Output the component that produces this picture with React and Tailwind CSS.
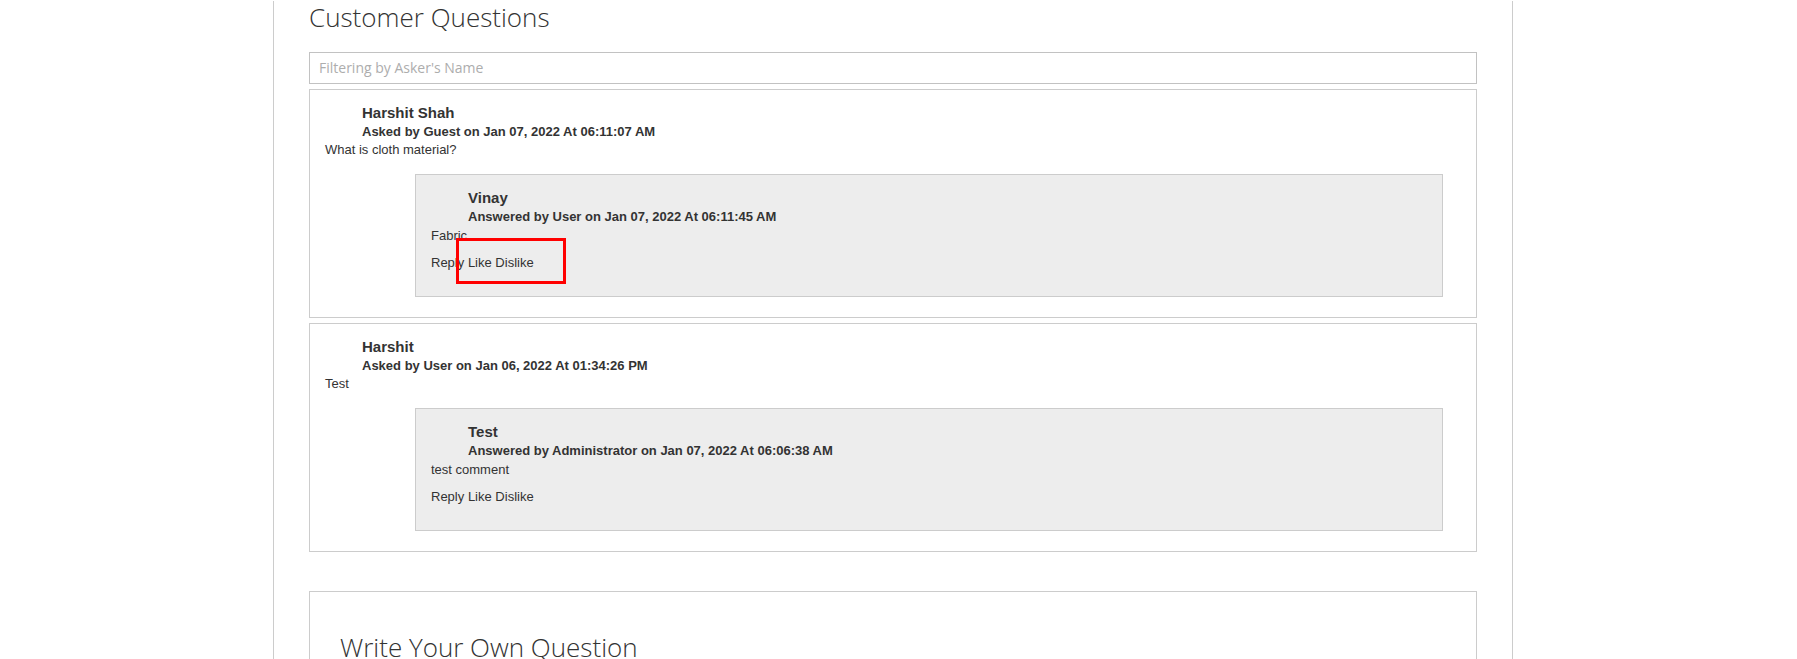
export default function App() {
  const questions = [
    {
      name: "Harshit Shah",
      meta: "Asked by Guest on Jan 07, 2022 At 06:11:07 AM",
      text: "What is cloth material?",
      answer: {
        name: "Vinay",
        meta: "Answered by User on Jan 07, 2022 At 06:11:45 AM",
        text: "Fabric",
      },
      highlight: true,
    },
    {
      name: "Harshit",
      meta: "Asked by User on Jan 06, 2022 At 01:34:26 PM",
      text: "Test",
      answer: {
        name: "Test",
        meta: "Answered by Administrator on Jan 07, 2022 At 06:06:38 AM",
        text: "test comment",
      },
      highlight: false,
    },
  ];

  return (
    <div className="h-[659px] overflow-hidden bg-white">
      <div className="ml-[273px] w-[1240px] h-[659px] border-x border-[#cccccc] px-[35px] text-[#333333]">
        <h2 className="mt-[1px] font-['Open_Sans',sans-serif] font-light text-[26px] leading-[32px] text-[#333333]">
          Customer Questions
        </h2>
        <input
          type="text"
          placeholder="Filtering by Asker's Name"
          className="mt-[19px] block w-full h-[32px] border border-[#c2c2c2] px-[9px] pb-[2px] font-['Open_Sans',sans-serif] text-[14px] text-[#333333] placeholder:text-[#adadad] outline-none"
        />
        {questions.map((q, i) => (
          <div
            key={i}
            className="mt-[5px] border border-[#cccccc] pt-[13px] pb-[20px] px-[15px] font-['Liberation_Sans',Arial,sans-serif]"
          >
            <div className="pl-[37px] text-[15px] font-bold leading-[20px]">{q.name}</div>
            <div className="pl-[37px] text-[13px] font-bold leading-[18px]">{q.meta}</div>
            <div className="text-[13px] leading-[18px]">{q.text}</div>
            <div className="relative mt-[15px] ml-[90px] mr-[18px] border border-[#cccccc] bg-[#ededed] pt-[13px] pb-[24px] px-[15px]">
              <div className="pl-[37px] text-[15px] font-bold leading-[20px]">{q.answer.name}</div>
              <div className="pl-[37px] text-[13px] font-bold leading-[18px]">{q.answer.meta}</div>
              <div className="mt-[1px] text-[13px] leading-[18px]">{q.answer.text}</div>
              <div className="mt-[9px] text-[13px] leading-[18px]">
                <span>Reply</span> <span>Like</span> <span>Dislike</span>
              </div>
              {q.highlight && (
                <div className="absolute left-[40px] top-[63px] w-[110px] h-[46px] border-[3px] border-[#ff0000]" />
              )}
            </div>
          </div>
        ))}
        <div className="mt-[39px] border border-[#cccccc] pt-[39px] px-[30px] h-[300px]">
          <h2 className="font-['Open_Sans',sans-serif] font-light text-[26px] leading-[32px] text-[#333333]">
            Write Your Own Question
          </h2>
        </div>
      </div>
    </div>
  );
}
